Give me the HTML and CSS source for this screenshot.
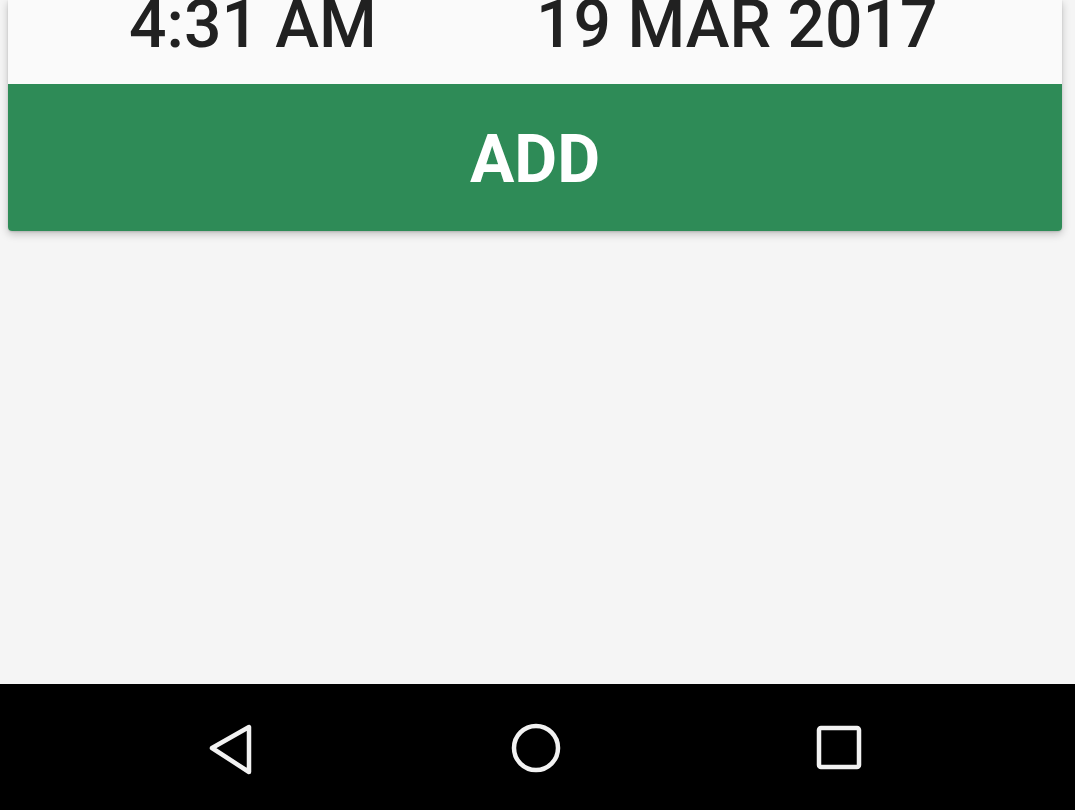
FILE: index.html
```html
<!DOCTYPE html>
<html>
<head>
<meta charset="utf-8">
<link rel="stylesheet" href="styles.css">
</head>
<body>
<div class="screen">
  <div class="content">
    <div class="card">
      <div class="datetime">
        <span class="time">4:31 AM</span>
        <span class="date">19 MAR 2017</span>
      </div>
      <div class="add-btn">ADD</div>
    </div>
  </div>
  <div class="navbar">
    <svg class="nav-icon" width="60" height="60" viewBox="0 0 60 60">
      <path d="M11 30 L48 9 L48 54 Z" fill="none" stroke="#f2f2f2" stroke-width="4.5" stroke-linejoin="round"/>
    </svg>
    <svg class="nav-icon" width="60" height="60" viewBox="0 0 60 60">
      <circle cx="30" cy="30" r="22" fill="none" stroke="#f2f2f2" stroke-width="4.5"/>
    </svg>
    <svg class="nav-icon" width="60" height="60" viewBox="0 0 60 60">
      <rect x="10" y="10" width="40" height="39" rx="2" fill="none" stroke="#f2f2f2" stroke-width="4.5"/>
    </svg>
  </div>
</div>
</body>
</html>
```
FILE: styles.css
```css
html, body {
  margin: 0;
  padding: 0;
}
body {
  width: 1075px;
  height: 810px;
  overflow: hidden;
  background: #f5f5f5;
  font-family: Roboto, "Liberation Sans", sans-serif;
}
.screen {
  display: flex;
  flex-direction: column;
  height: 810px;
}
.content {
  flex: 1;
  padding: 0 13px 0 8px;
}
.card {
  background: #fafafa;
  border-radius: 0 0 4px 4px;
  box-shadow: 0 3px 8px rgba(0,0,0,0.22), 0 1px 2px rgba(0,0,0,0.12);
  overflow: hidden;
}
.datetime {
  display: flex;
  height: 84px;
  padding-left: 121px;
  font-size: 66px;
  font-weight: 500;
  line-height: 50px;
  color: #212121;
}
.time {
  width: 407px;
}
.add-btn {
  height: 147px;
  background: #2e8b57;
  color: #ffffff;
  font-size: 66px;
  font-weight: 700;
  display: flex;
  align-items: center;
  justify-content: center;
  line-height: 1;
  padding-top: 4px;
  box-sizing: border-box;
}
.navbar {
  height: 126px;
  background: #000000;
  display: flex;
  align-items: center;
  padding-top: 1px;
  box-sizing: border-box;
}
.nav-icon {
  display: block;
}
.nav-icon:nth-child(1) {
  margin-left: 201px;
}
.nav-icon:nth-child(2) {
  margin-left: 245px;
}
.nav-icon:nth-child(3) {
  margin-left: 243px;
}
```
